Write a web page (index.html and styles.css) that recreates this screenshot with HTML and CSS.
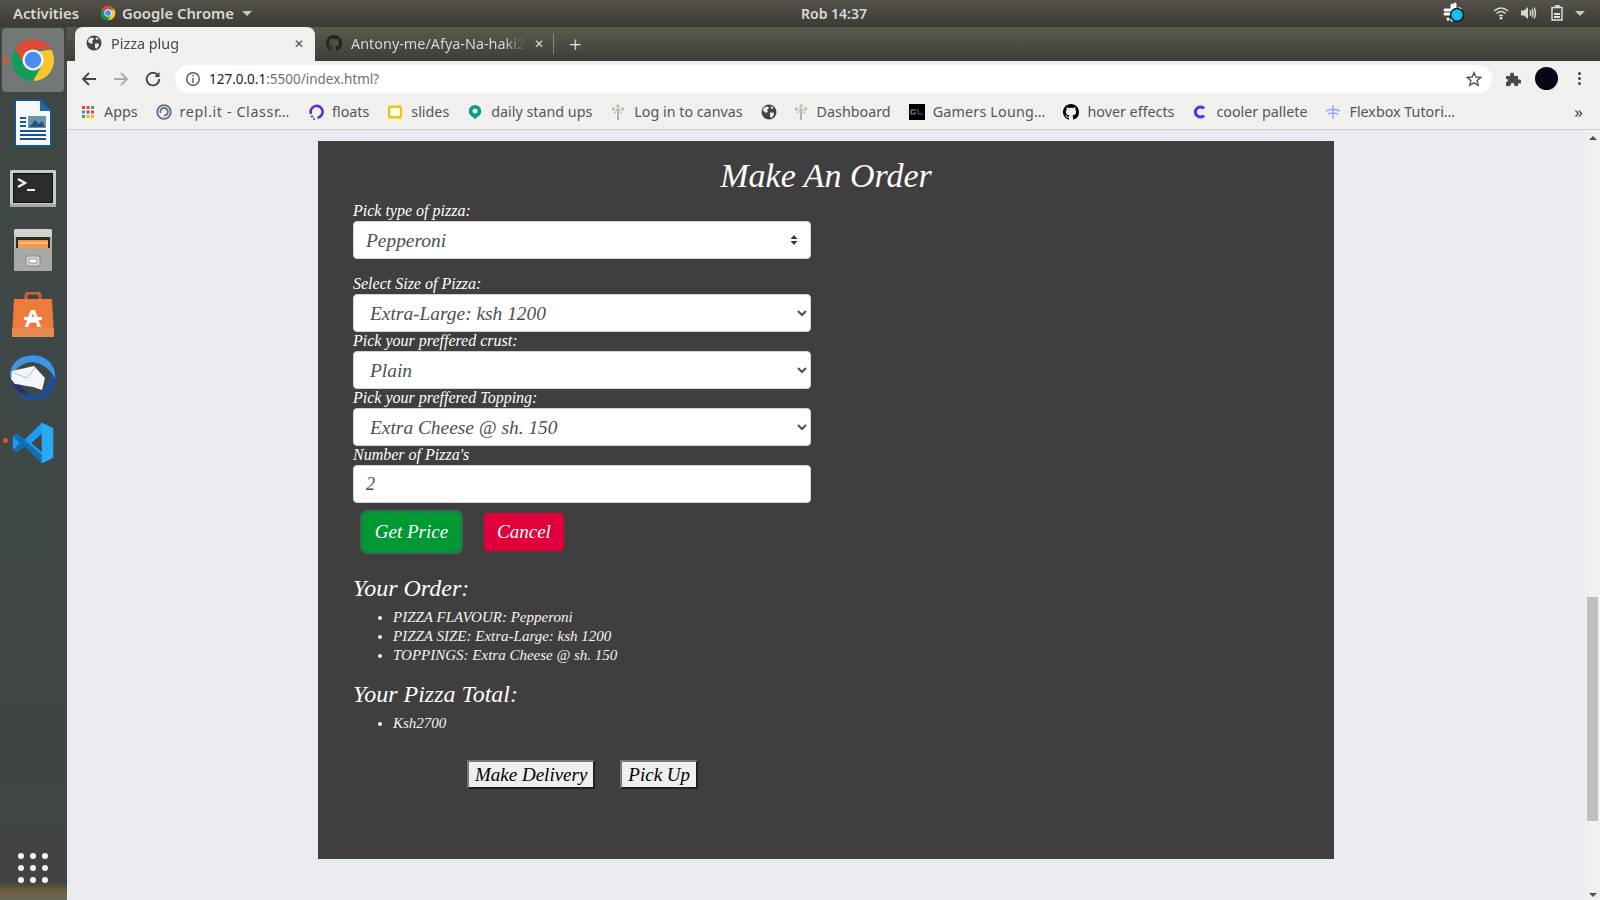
FILE: index.html
```html
<!DOCTYPE html>
<html lang="en">
<head>
    <meta charset="UTF-8">
    <title>Pizza plug</title>
    <link rel="stylesheet" href="styles.css">
</head>
<body>

    <svg class="defs" width="0" height="0">
        <symbol id="chrome" viewBox="0 0 48 48">
            <circle cx="24" cy="24" r="22" fill="#0f9d58"/>
            <path d="M43 13A22 22 0 0 1 24 46L33.5 29.5 30 15z" fill="#fdc62f"/>
            <path d="M24 2A22 22 0 0 1 43 13H24A11 11 0 0 0 14.5 29.5L5.5 12.2A22 22 0 0 1 24 2z" fill="#dc4a38"/>
            <circle cx="24" cy="24" r="11" fill="#f4f4f4"/>
            <circle cx="24" cy="24" r="8.6" fill="#4b8bf5"/>
        </symbol>
        <symbol id="globe" viewBox="0 0 16 16">
            <circle cx="8" cy="8" r="7.5" fill="#454545"/>
            <path d="M3 3.5 6.5 2.5 8 4 6 6 7 7.5 5 9 2 6.5zM9 8.5 12.5 8.5 13 10.5 10.5 14 9 12.5zM10 2.2 12.5 3.5 11.5 5 9.5 4z" fill="#f1f0ee"/>
        </symbol>
        <symbol id="github" viewBox="0 0 16 16">
            <path fill-rule="evenodd" d="M8 0C3.58 0 0 3.58 0 8c0 3.54 2.29 6.53 5.47 7.59.4.07.55-.17.55-.38 0-.19-.01-.82-.01-1.49-2.01.37-2.53-.49-2.69-.94-.09-.23-.48-.94-.82-1.13-.28-.15-.68-.52-.01-.53.63-.01 1.08.58 1.23.82.72 1.21 1.87.87 2.33.66.07-.52.28-.87.51-1.07-1.78-.2-3.64-.89-3.64-3.95 0-.87.31-1.59.82-2.15-.08-.2-.36-1.02.08-2.12 0 0 .67-.21 2.2.82.64-.18 1.32-.27 2-.27s1.36.09 2 .27c1.53-1.04 2.2-.82 2.2-.82.44 1.1.16 1.92.08 2.12.51.56.82 1.27.82 2.15 0 3.07-1.87 3.75-3.65 3.95.29.25.54.73.54 1.48 0 1.07-.01 1.93-.01 2.2 0 .21.15.46.55.38A8.01 8.01 0 0 0 16 8c0-4.42-3.58-8-8-8z"/>
        </symbol>
        <symbol id="sprout" viewBox="0 0 16 18">
            <path d="M8 8V17" stroke="#8a8a72" stroke-width="1.2"/>
            <g fill="#b4c4a6">
                <circle cx="8" cy="3" r="1.7"/><circle cx="3.5" cy="6" r="1.7"/><circle cx="12.5" cy="6" r="1.7"/><circle cx="8" cy="7" r="2"/><circle cx="5" cy="9.5" r="1.1"/><circle cx="11" cy="9.5" r="1.1"/>
            </g>
        </symbol>
    </svg>

    <header class="top-bar">
        <span class="activities">Activities</span>
        <span class="app-menu">
            <svg width="16" height="16"><use href="#chrome"/></svg>
            Google Chrome
            <i class="caret"></i>
        </span>
        <span class="clock">Rob 14:37</span>
        <span class="tray">
            <svg width="24" height="22" viewBox="0 0 24 22">
                <g stroke="#fff" stroke-width="3" stroke-linecap="round">
                    <path d="M3 8H8M10 3V8M13 2V7M16 7H18M3 12H8M6 17V17.2M10 12V18"/>
                </g>
                <circle cx="15" cy="13" r="6.5" fill="#0cc2ee" stroke="#111" stroke-width="1.4"/>
            </svg>
            <svg class="wifi" width="16" height="14" viewBox="0 0 16 14" fill="none" stroke="#d8d8d2" stroke-width="1.5">
                <path d="M1 5Q8-1 15 5M3.5 7.5Q8 3.5 12.5 7.5M6 10Q8 8.6 10 10"/>
                <circle cx="8" cy="12.3" r="1.3" fill="#eee" stroke="none"/>
            </svg>
            <svg class="volume" width="16" height="14" viewBox="0 0 16 14" fill="none" stroke="#d8d8d2" stroke-width="1.5">
                <path d="M0 4.5H3L7 1V13L3 9.5H0z" fill="#d8d8d2" stroke="none"/>
                <path d="M9 4.5Q10.5 7 9 9.5M11 3Q13 7 11 11M13 1.5Q16 7 13 12.5"/>
            </svg>
            <svg class="battery" width="12" height="16" viewBox="0 0 12 16" fill="none" stroke="#e4e4de" stroke-width="1.4">
                <path d="M4 .8H8V2M1 2.5H11V15H1z"/>
                <path d="M3 9H9M3 12H9" stroke-width="2"/>
            </svg>
            <i class="caret caret-tray"></i>
        </span>
    </header>

    <div class="desktop">
        <nav class="dock">
            <div class="dock-item active">
                <i class="dot"></i>
                <svg width="46" height="46"><use href="#chrome"/></svg>
            </div>
            <div class="dock-item">
                <svg width="38" height="48" viewBox="0 0 38 48">
                    <path d="M1 1H26L37 12V47H1z" fill="#f6f8fa" stroke="#17558f" stroke-width="2"/>
                    <path d="M26 1 37 12H26z" fill="#1b6ba8"/>
                    <rect x="14" y="17" width="18" height="12" fill="#6e93ae"/>
                    <path d="M15 28 21 21 25 25 28 22 31 28z" fill="#24557c"/>
                    <path d="M6 19H12M6 23H12M6 27H12M6 32H32M6 36H32M6 40H32" stroke="#17558f" stroke-width="2"/>
                </svg>
            </div>
            <div class="dock-item nudge-2">
                <svg width="46" height="38" viewBox="0 0 46 38">
                    <rect width="46" height="37" rx="1" fill="#c9c9c9"/>
                    <rect y="34" width="46" height="3" fill="#a8a8a8"/>
                    <rect x="3.5" y="3.5" width="39" height="29" fill="#2c2c2c" stroke="#111"/>
                    <path d="M8 9 15 13 8 17" fill="none" stroke="#eee" stroke-width="2.4"/>
                    <path d="M17 20H25" stroke="#eee" stroke-width="2"/>
                </svg>
            </div>
            <div class="dock-item">
                <svg width="40" height="44" viewBox="0 0 40 44">
                    <rect x="1" y="1" width="38" height="42" rx="2" fill="#b4b4b2"/>
                    <rect x="1" y="1" width="38" height="8" rx="2" fill="#d2d2d0"/>
                    <rect x="3" y="9" width="34" height="12" fill="#2d2a26"/>
                    <rect x="5" y="12" width="30" height="8" fill="#f29a45"/>
                    <path d="M5 15H35" stroke="#fde2b8"/>
                    <rect x="1" y="20" width="38" height="23" rx="1" fill="#a9a9a7"/>
                    <rect x="13" y="28" width="14" height="10" rx="2" fill="#d6d6d4" stroke="#888"/>
                    <rect x="16" y="31" width="8" height="4" fill="#fafafa" stroke="#666" stroke-width=".6"/>
                </svg>
            </div>
            <div class="dock-item nudge-1">
                <svg width="44" height="46" viewBox="0 0 44 46">
                    <path d="M15 12V4Q15 1 18 1H26Q29 1 29 4V12" fill="none" stroke="#d5622c" stroke-width="3"/>
                    <path d="M3 7H41L43 45H1z" fill="#ee7b3c"/>
                    <path d="M1 36H43V45H1z" fill="#e9884f"/>
                    <text x="22" y="35" class="bag-letter">A</text>
                    <rect x="13" y="25" width="18" height="3" fill="#fff"/>
                </svg>
            </div>
            <div class="dock-item">
                <svg width="48" height="46" viewBox="0 0 48 46">
                    <path d="M12 4A23 23 0 1 1 6 38Q16 44 30 40 42 32 42 18 36 6 24 4z" fill="#1b4f9c"/>
                    <path d="M1 24Q0 9 14 3 30-2 41 8 47 16 46 24 38 10 24 8 10 8 1 24z" fill="#3f95e4"/>
                    <path d="M3 17 25 12 36 24 33 36 24 33 6 30 2 25z" fill="#f4f5f8"/>
                    <path d="M5 19 18 24 26 14" fill="none" stroke="#b8bccb" stroke-width="1"/>
                    <path d="M4 30Q7 39 20 41 14 35 12 31z" fill="#2a2f70"/>
                </svg>
            </div>
            <div class="dock-item nudge-2">
                <i class="dot"></i>
                <svg width="42" height="42" viewBox="0 0 100 100">
                    <path d="M71 2 98 15V85L71 98 30 58 12 72 2 66V34L12 28 30 42zM71 28 46 50 71 72z" fill="#1f9cf0"/>
                    <path d="M71 2 98 15V85L71 98z" fill="#2aa9f5"/>
                    <path d="M2 34 12 28 71 78V98L30 58 12 72 2 66 18 50z" fill="#0f6fb5"/>
                </svg>
            </div>
            <div class="app-grid">
                <i></i><i></i><i></i><i></i><i></i><i></i><i></i><i></i><i></i>
            </div>
        </nav>

        <div class="browser">
            <div class="tab-strip">
                <div class="tab tab-active">
                    <svg width="16" height="16"><use href="#globe"/></svg>
                    <span class="tab-title">Pizza plug</span>
                    <span class="tab-close">&#10005;</span>
                </div>
                <div class="tab">
                    <svg class="gh-dark" width="16" height="16"><use href="#github"/></svg>
                    <span class="tab-title">Antony-me/Afya-Na-haki2</span>
                    <span class="tab-close">&#10005;</span>
                </div>
                <i class="tab-sep"></i>
                <span class="new-tab">+</span>
            </div>

            <div class="toolbar">
                <svg class="nav-ico" width="16" height="16" viewBox="0 0 16 16" fill="none" stroke="#444" stroke-width="1.8"><path d="M15 8H2M8 2 2 8 8 14"/></svg>
                <svg class="nav-ico" width="16" height="16" viewBox="0 0 16 16" fill="none" stroke="#a9a9a9" stroke-width="1.8"><path d="M1 8H14M8 2 14 8 8 14"/></svg>
                <svg class="nav-ico nav-last" width="16" height="16" viewBox="0 0 16 16" fill="none" stroke="#444" stroke-width="1.8"><path d="M13.5 5A6.3 6.3 0 1 0 14.3 8"/><path d="M14.5 1V6H9.5z" fill="#444" stroke="none"/></svg>
                <div class="url-box">
                    <svg width="16" height="16" viewBox="0 0 16 16" fill="none" stroke="#555" stroke-width="1.4"><circle cx="8" cy="8" r="6.3"/><path d="M8 7V12M8 4V5.6"/></svg>
                    <span class="url"><b>127.0.0.1</b>:5500/index.html?</span>
                    <svg class="star" width="16" height="16" viewBox="0 0 16 16" fill="none" stroke="#555" stroke-width="1.4"><path d="M8 1.6 9.9 6 14.8 6.4 11.1 9.6 12.2 14.3 8 11.8 3.8 14.3 4.9 9.6 1.2 6.4 6.1 6z"/></svg>
                </div>
                <svg class="puzzle" width="16" height="16" viewBox="0 0 16 16"><path d="M1 5H5V3.5A2 2 0 0 1 9 3.5V5H13V8.5H14.5A2 2 0 0 1 14.5 12.5H13V15H9.5V14A2 2 0 0 0 5.5 14V15H1V11H2A2 2 0 0 0 2 8H1z" fill="#4a4a4a"/></svg>
                <i class="avatar"></i>
                <span class="kebab"><i></i><i></i><i></i></span>
            </div>

            <div class="bookmarks">
                <span class="mark">
                    <svg width="16" height="16" viewBox="0 0 16 16">
                        <path d="M2 2h3v3H2z" fill="#ea4335"/><path d="M6.5 2h3v3h-3z" fill="#ea4335"/><path d="M11 2h3v3h-3z" fill="#34a853"/>
                        <path d="M2 6.5h3v3H2z" fill="#4285f4"/><path d="M6.5 6.5h3v3h-3z" fill="#7e57c2"/><path d="M11 6.5h3v3h-3z" fill="#ea4335"/>
                        <path d="M2 11h3v3H2z" fill="#34a853"/><path d="M6.5 11h3v3h-3z" fill="#fbbc05"/><path d="M11 11h3v3h-3z" fill="#fbbc05"/>
                    </svg>
                    Apps
                </span>
                <span class="mark mark-wide">
                    <svg width="16" height="16" viewBox="0 0 16 16" fill="none" stroke="#5d6f80" stroke-width="1.8"><circle cx="8" cy="8" r="6.8"/><path d="M4.5 9A3.8 3.8 0 1 1 8 11.6"/></svg>
                    repl.it - Classr…
                </span>
                <span class="mark">
                    <svg width="16" height="16" viewBox="0 0 16 16" fill="none" stroke="#5b2be0" stroke-width="2.6"><path d="M3 10A6 6 0 1 1 9.5 13.8"/><path d="M2.5 12.5h3M5 15h2" stroke-width="1.6"/></svg>
                    floats
                </span>
                <span class="mark">
                    <svg width="16" height="16" viewBox="0 0 16 16"><rect x="1" y="1.5" width="14" height="13" rx="1.5" fill="#f4c20d"/><rect x="3.2" y="4" width="9.6" height="8" fill="#fdfbe9"/></svg>
                    slides
                </span>
                <span class="mark">
                    <svg width="16" height="16" viewBox="0 0 16 16"><path d="M8 1A6.3 6.3 0 0 1 9.5 13.4L8 15.5 6.5 13.4A6.3 6.3 0 0 1 8 1z" fill="#0c9d7f"/><circle cx="8" cy="7" r="2.5" fill="#f1f0ee"/></svg>
                    daily stand ups
                </span>
                <span class="mark">
                    <svg width="16" height="18"><use href="#sprout"/></svg>
                    Log in to canvas
                </span>
                <span class="mark mark-icon">
                    <svg width="16" height="16"><use href="#globe"/></svg>
                </span>
                <span class="mark">
                    <svg width="16" height="18"><use href="#sprout"/></svg>
                    Dashboard
                </span>
                <span class="mark mark-cut">
                    <svg width="16" height="16" viewBox="0 0 16 16"><rect width="16" height="16" fill="#000"/><path d="M2 6H7M2 6V10H6V8" fill="none" stroke="#999" stroke-width="1"/><path d="M9 5V10H14" fill="none" stroke="#3a5fd0" stroke-width="1"/></svg>
                    Gamers Loung…
                </span>
                <span class="mark">
                    <svg width="16" height="16"><use href="#github"/></svg>
                    hover effects
                </span>
                <span class="mark">
                    <svg width="16" height="16" viewBox="0 0 16 16" fill="none" stroke="#3b3bf0" stroke-width="3"><path d="M12 4.5A5 5 0 1 0 12 11.5"/></svg>
                    cooler pallete
                </span>
                <span class="mark">
                    <svg width="16" height="16" viewBox="0 0 16 16" fill="none" stroke="#8fa6f5" stroke-width="1.4"><path d="M8 1V15M1 7Q8 3.5 15 7M3 10Q8 8 13 10"/></svg>
                    Flexbox Tutori…
                </span>
                <span class="more">»</span>
            </div>

            <div class="viewport">
                <main class="page">
                    <section class="panel">
                        <h1 class="panel-title">Make An Order</h1>
                        <form class="order-form">
                            <div class="field field-first">
                                <label for="flavour">Pick type of pizza:</label>
                                <div class="select-wrap">
                                    <select id="flavour" class="control control-custom">
                                        <option>Pepperoni</option>
                                    </select>
                                    <svg class="updown" width="8" height="12" viewBox="0 0 8 12"><path d="M4 1 7.5 5H.5zM4 11 .5 7H7.5z" fill="#343a40"/></svg>
                                </div>
                            </div>
                            <div class="field">
                                <label for="size">Select Size of Pizza:</label>
                                <select id="size" class="control"><option>Extra-Large: ksh 1200</option></select>
                            </div>
                            <div class="field">
                                <label for="crust">Pick your preffered crust:</label>
                                <select id="crust" class="control"><option>Plain</option></select>
                            </div>
                            <div class="field">
                                <label for="topping">Pick your preffered Topping:</label>
                                <select id="topping" class="control"><option>Extra Cheese @ sh. 150</option></select>
                            </div>
                            <div class="field">
                                <label for="count">Number of Pizza's</label>
                                <input id="count" class="control control-input" type="number" value="2">
                            </div>
                            <div class="actions">
                                <button type="button" class="btn btn-green">Get Price</button>
                                <button type="button" class="btn btn-red">Cancel</button>
                            </div>
                        </form>

                        <h2 class="summary-title">Your Order:</h2>
                        <ul class="summary">
                            <li>PIZZA FLAVOUR: Pepperoni</li>
                            <li>PIZZA SIZE: Extra-Large: ksh 1200</li>
                            <li>TOPPINGS: Extra Cheese @ sh. 150</li>
                        </ul>
                        <h2 class="summary-title">Your Pizza Total:</h2>
                        <ul class="summary">
                            <li>Ksh2700</li>
                        </ul>

                        <div class="delivery">
                            <button type="button" class="plain-btn">Make Delivery</button>
                            <button type="button" class="plain-btn">Pick Up</button>
                        </div>
                    </section>
                </main>
                <div class="scrollbar">
                    <i class="arrow arrow-up"></i>
                    <i class="thumb"></i>
                    <i class="arrow arrow-down"></i>
                </div>
            </div>
        </div>
    </div>

</body>
</html>
```

FILE: styles.css
```css
* {
    box-sizing: border-box;
}

body {
    margin: 0;
    height: 900px;
    overflow: hidden;
    display: flex;
    flex-direction: column;
    font-family: "Noto Sans", sans-serif;
    background-color: #e9ebf0;
}

i {
    display: block;
}

.defs {
    position: absolute;
}

/* ubuntu top bar */
.top-bar {
    height: 27px;
    flex: none;
    display: flex;
    align-items: center;
    padding: 0 0 1px 13px;
    background: linear-gradient(#55524a, #3c3a34);
    color: #d9d9d3;
    font-size: 14.8px;
    font-weight: 600;
    position: relative;
}

.app-menu {
    display: flex;
    align-items: center;
    gap: 6px;
    margin-left: 21px;
}

.caret {
    width: 0;
    height: 0;
    border: 5px solid transparent;
    border-top: 5px solid #c8c8c2;
    border-bottom: 0;
    margin-left: 2px;
}

.clock {
    position: absolute;
    left: 801px;
    width: 0;
    white-space: nowrap;
    font-size: 14px;
}

.tray {
    margin-left: auto;
    display: flex;
    align-items: center;
    padding-right: 15px;
}

.wifi {
    margin-left: 27px;
}

.volume {
    margin-left: 12px;
}

.battery {
    margin-left: 14px;
}

.caret-tray {
    margin-left: 12px;
}

.desktop {
    flex: 1;
    display: flex;
    min-height: 0;
}

/* dock */
.dock {
    width: 67px;
    flex: none;
    display: flex;
    flex-direction: column;
    align-items: center;
    padding: 1px 2px 0 0;
    background: linear-gradient(#3f4644 0, #3e4846 40%, #414442 98%, #6e5f3f 99%, #6b6a5a 100%);
}

.dock-item {
    width: 62px;
    height: 63.5px;
    display: flex;
    align-items: center;
    justify-content: center;
    position: relative;
    flex: none;
}

.dock-item.active {
    background-color: #737876;
    border-radius: 4px;
}

.nudge-1 {
    padding-top: 2px;
}

.nudge-2 {
    padding-top: 4px;
}

.dot {
    position: absolute;
    left: 1px;
    top: 29px;
    width: 5px;
    height: 5px;
    border-radius: 50%;
    background-color: #e95420;
}

.bag-letter {
    font-family: "Liberation Sans", sans-serif;
    font-size: 24px;
    font-weight: 700;
    fill: #fff;
    text-anchor: middle;
}

.app-grid {
    margin-top: auto;
    margin-bottom: 17px;
    display: grid;
    grid-template-columns: repeat(3, 6px);
    gap: 6px;
}

.app-grid i {
    width: 6px;
    height: 6px;
    border-radius: 50%;
    background-color: #f2f2f2;
}

/* browser */
.browser {
    flex: 1;
    display: flex;
    flex-direction: column;
    min-width: 0;
}

.tab-strip {
    height: 34px;
    flex: none;
    display: flex;
    align-items: center;
    padding-left: 8px;
    background: linear-gradient(#5a5b4d, #3e3d37);
    color: #d7d7d2;
    font-size: 14.4px;
}

.tab {
    width: 240px;
    height: 34px;
    display: flex;
    align-items: center;
    padding: 0 9px 2px 11px;
    gap: 9px;
}

.tab-active {
    background-color: #f1f0ee;
    color: #4a4a4a;
    border-radius: 8px 8px 0 0;
}

.tab-title {
    flex: 1;
    overflow: hidden;
    white-space: nowrap;
    -webkit-mask-image: linear-gradient(to right, #000 88%, transparent);
    mask-image: linear-gradient(to right, #000 88%, transparent);
}

.tab-close {
    font-size: 12px;
    width: 12px;
}

.gh-dark {
    fill: #22221f;
}

.tab-sep {
    width: 1px;
    height: 20px;
    background-color: #87877e;
    margin-left: -2px;
}

.new-tab {
    font-size: 22px;
    font-weight: 300;
    color: #e8e8e4;
    margin-left: 15px;
    line-height: 1;
}

.toolbar {
    height: 35px;
    flex: none;
    display: flex;
    align-items: center;
    padding-left: 14px;
    background-color: #f1f0ee;
}

.nav-ico {
    margin-right: 16px;
}

.nav-last {
    margin-right: 14px;
}

.url-box {
    width: 1317px;
    height: 28px;
    display: flex;
    align-items: center;
    gap: 8px;
    padding: 0 10px;
    background-color: #fff;
    border-radius: 14px;
    font-size: 13.5px;
    color: #6f6f6f;
}

.url b {
    font-weight: 400;
    color: #222;
}

.star {
    margin-left: auto;
}

.puzzle {
    margin-left: 13px;
}

.avatar {
    width: 23px;
    height: 23px;
    border-radius: 50%;
    background-color: #060617;
    margin-left: 14px;
}

.kebab {
    display: flex;
    flex-direction: column;
    gap: 2px;
    margin-left: 20px;
}

.kebab i {
    width: 3px;
    height: 3px;
    border-radius: 50%;
    background-color: #444;
}

.bookmarks {
    height: 34px;
    flex: none;
    display: flex;
    align-items: center;
    gap: 18px;
    padding: 0 0 2px 13px;
    background-color: #f1f0ee;
    border-bottom: 1px solid #cfcfcf;
    color: #555;
    font-size: 14.3px;
    white-space: nowrap;
}

.mark {
    display: flex;
    align-items: center;
    gap: 8px;
}

.mark-wide {
    letter-spacing: .6px;
}

.mark-cut {
    letter-spacing: .2px;
}

.mark-icon {
    margin-right: -2px;
}

.more {
    margin-left: auto;
    margin-right: 17px;
    font-size: 17px;
    color: #444;
}

/* page */
.viewport {
    flex: 1;
    display: flex;
    min-height: 0;
}

.page {
    flex: 1;
    padding-top: 11px;
    min-width: 0;
}

.panel {
    width: 1016px;
    height: 718px;
    margin: 0 auto;
    padding: 0 35px;
    background-color: #403e3f;
    color: #fff;
    font-family: "Liberation Serif", serif;
    font-style: italic;
}

.panel-title {
    margin: 0;
    padding-top: 14px;
    height: 61px;
    font-size: 34px;
    line-height: 42px;
    font-weight: 400;
    text-align: center;
}

.order-form {
    width: 458px;
}

.field label {
    display: block;
    height: 19px;
    font-size: 16px;
    line-height: 18px;
}

.field-first {
    margin-bottom: 16px;
}

.select-wrap {
    position: relative;
}

.control {
    display: block;
    width: 100%;
    height: 38px;
    padding: 0 12px;
    border: 1px solid #ced4da;
    border-radius: 4px;
    background-color: #fff;
    color: #495057;
    font-family: inherit;
    font-style: italic;
    font-size: 19.4px;
}

.control-input {
    font-size: 18px;
}

.control-custom {
    appearance: none;
}

.updown {
    position: absolute;
    right: 13px;
    top: 13px;
}

.actions {
    display: flex;
    gap: 24px;
    margin: 10px 0 0 10px;
}

.btn {
    height: 38px;
    border: 1px solid transparent;
    border-radius: 4px;
    color: #fff;
    font-family: inherit;
    font-style: italic;
    font-size: 19px;
}

.btn-green {
    width: 97px;
    background-color: #009933;
    box-shadow: 0 0 0 3px #1d7c45;
}

.btn-red {
    width: 80px;
    background-color: #e0003c;
}

.summary-title {
    margin: 22px 0 0;
    height: 30px;
    font-size: 24px;
    line-height: 30px;
    font-weight: 400;
}

.summary {
    margin: 5px 0 0;
    padding-left: 40px;
    font-size: 15px;
    line-height: 19px;
    color: #f4f4f4;
}

.summary + .summary-title {
    margin-top: 14px;
}

.delivery {
    display: flex;
    gap: 25px;
    margin: 27px 0 0 114px;
}

.plain-btn {
    height: 29px;
    padding: 0 6px;
    border: 2px outset #767676;
    background-color: #efefef;
    color: #000;
    font-family: inherit;
    font-style: italic;
    font-size: 19px;
}

/* scrollbar */
.scrollbar {
    width: 15px;
    flex: none;
    display: flex;
    flex-direction: column;
    align-items: center;
    background-color: #f0f0f0;
}

.arrow {
    width: 0;
    height: 0;
    border: 4px solid transparent;
}

.arrow-up {
    border-bottom: 4px solid #505050;
    border-top: 0;
    margin-top: 6px;
}

.thumb {
    width: 11px;
    height: 224px;
    margin-top: 457px;
    background-color: #bfbfbf;
}

.arrow-down {
    border-top: 4px solid #505050;
    border-bottom: 0;
    margin-top: auto;
    margin-bottom: 3px;
}
```
